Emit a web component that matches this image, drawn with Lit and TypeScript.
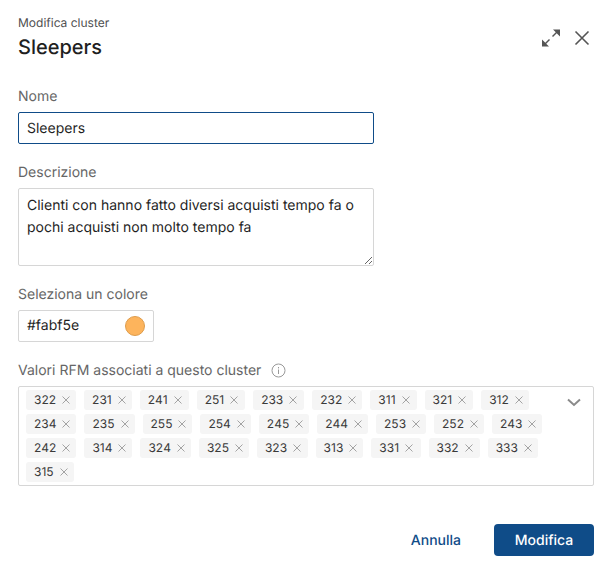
import { LitElement, html, css } from "lit";
import { customElement } from "lit/decorators.js";

const TAGS = ["322","231","241","251","233","232","311","321","312","234","235","255","254","245","244","253","252","243","242","314","324","325","323","313","331","332","333","315"];
const EXTRA: Record<string, number> = { "241": 1, "251": 1, "233": 1, "311": 1, "321": 1, "323": 0.5, "331": 1.5, "332": 1 };

@customElement("app-root")
export class AppRoot extends LitElement {
  static styles = css`
    :host { display: block; width: 612px; height: 571px; background: #fff; font-family: Inter, "Liberation Sans", sans-serif; color: #1f1f1f; overflow: hidden; text-rendering: geometricPrecision; }
    * { box-sizing: border-box; }
    .dialog { display: flex; flex-direction: column; padding: 15px 18px 0; height: 571px; }
    .head { display: flex; justify-content: space-between; height: 58px; margin-bottom: 15px; }
    .sub { font-size: 12px; line-height: 15px; color: #4f4f4f; }
    .title { font-size: 20px; line-height: 28px; font-weight: 500; color: #1f1f1f; margin-top: 3px; }
    .actions { display: flex; gap: 13px; padding-top: 13px; align-items: flex-start; margin-right: 4px; }
    .actions svg { display: block; }
    .field { display: flex; flex-direction: column; margin-bottom: 20px; }
    label, .label { display: flex; align-items: flex-start; font-size: 14px; line-height: 18px; height: 16px; color: #666; margin-bottom: 8px; }
    .control { font: 14px/22px Inter, "Liberation Sans", sans-serif; color: #1f1f1f; background: #fff; border: 1px solid #d6d6d6; border-radius: 2px; outline: none; text-rendering: geometricPrecision; }
    input.control { width: 356px; height: 32px; padding: 0 8px; border-color: #0f4c88; }
    textarea.control { display: block; width: 356px; height: 78px; padding: 6px 8px; resize: vertical; }
    .color { display: flex; align-items: center; justify-content: space-between; width: 136px; height: 32px; padding: 0 8px; }
    .swatch { width: 20px; height: 20px; border-radius: 50%; background: #fdb45c; border: 1px solid #dd9c4c; }
    .label svg { margin-left: 10px; margin-top: 1px; }
    .select { position: relative; width: 576px; height: 100px; padding: 3px 7px; }
    .tags { display: flex; flex-wrap: wrap; gap: 4px 8px; width: 530px; }
    .tag { display: inline-flex; align-items: center; height: 20px; padding: 0 6px 0 8px; gap: 6px; background: #f5f5f5; border-radius: 3px; font-size: 12px; line-height: 20px; color: #3a3a3a; font-kerning: none; }
    .tag svg { display: block; }
    .chev { position: absolute; right: 12px; top: 11px; }
    .foot { display: flex; justify-content: flex-end; align-items: center; margin-top: 38px; }
    button { font: 500 14px Inter, "Liberation Sans", sans-serif; border: 0; background: none; cursor: pointer; height: 32px; border-radius: 4px; padding: 0; text-rendering: geometricPrecision; }
    .ghost { color: #0f4c88; margin-right: 33px; }
    .primary { width: 100px; background: #0f4c88; color: #fff; }
    .last { margin-bottom: 0; }
  `;

  private x() {
    return html`<svg width="8" height="8" viewBox="0 0 8 8" fill="none" stroke="#a3a3a3" stroke-width="1"><path d="M.5.5l7 7M7.5.5l-7 7"/></svg>`;
  }

  render() {
    return html`<div class="dialog">
      <div class="head">
        <div>
          <div class="sub">Modifica cluster</div>
          <div class="title">Sleepers</div>
        </div>
        <div class="actions">
          <svg width="20" height="20" viewBox="0 0 20 20" fill="none" stroke="#555" stroke-width="1.5">
            <path d="M11.5 8.5L16 4" />
            <path d="M12 1.5h7v7l-2.3-2.3-2.4-2.4z" fill="#555" stroke="none"/>
            <path d="M8.5 11.5L4 16" />
            <path d="M1 11.5v7h7l-2.3-2.3-2.4-2.4z" fill="#555" stroke="none"/>
          </svg>
          <svg width="16" height="16" viewBox="0 0 16 16" fill="none" stroke="#555" stroke-width="1.6" style="margin-top:2px"><path d="M1.5 1.5l13 13M14.5 1.5l-13 13"/></svg>
        </div>
      </div>
      <div class="field">
        <label>Nome</label>
        <input class="control" .value=${"Sleepers"} />
      </div>
      <div class="field">
        <label>Descrizione</label>
        <textarea class="control" .value=${"Clienti con hanno fatto diversi acquisti tempo fa o pochi acquisti non molto tempo fa"}></textarea>
      </div>
      <div class="field">
        <label>Seleziona un colore</label>
        <div class="control color"><span>#fabf5e</span><span class="swatch"></span></div>
      </div>
      <div class="field last">
        <div class="label">Valori RFM associati a questo cluster
          <svg width="15" height="15" viewBox="0 0 15 15" fill="none" stroke="#999"><circle cx="7.5" cy="7.5" r="6.5"/><path d="M7.5 6.5v4.5M7.5 4v1.4"/></svg>
        </div>
        <div class="control select">
          <div class="tags">
            ${TAGS.map((t) => html`<span class="tag" style="padding-right:${6 + (EXTRA[t] ?? 0)}px">${t}${this.x()}</span>`)}
          </div>
          <svg class="chev" width="14" height="9" viewBox="0 0 14 9" fill="none" stroke="#8a8a8a" stroke-width="2"><path d="M1 1.5l6 5.5 6-5.5"/></svg>
        </div>
      </div>
      <div class="foot">
        <button class="ghost">Annulla</button>
        <button class="primary">Modifica</button>
      </div>
    </div>`;
  }
}
